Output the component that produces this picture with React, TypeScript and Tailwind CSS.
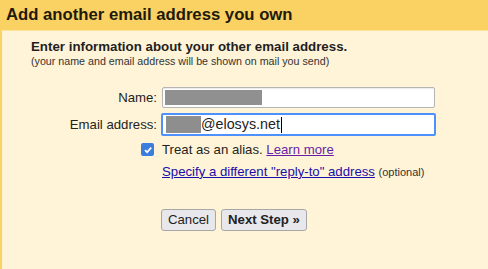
import React from "react";

const App: React.FC = () => {
  return (
    <div className="w-[488px] h-[269px] overflow-hidden bg-[#fff4d8] font-['Liberation_Sans',Arial,sans-serif] text-[#222]">
      <div className="h-[30px] bg-[#fad163] pl-[6px] pt-[5px] text-[16.7px] font-bold leading-[20px] text-[#1f1a0c]">
        Add another email address you own
      </div>
      <div className="h-[239px] border-l-[2px] border-t border-[#fad163] border-t-[#fde49a] pl-[29px] pt-[8px]">
        <div className="text-[13.3px] font-bold leading-[16px] text-[#1f1f1f]">
          Enter information about your other email address.
        </div>
        <div className="text-[10.7px] leading-[13px] text-[#333]">
          (your name and email address will be shown on mail you send)
        </div>

        <div className="mt-[19px] grid grid-cols-[131px_1fr] items-center gap-y-[5px] text-[13.2px]">
          <label className="pr-[5px] text-right text-[#222]">Name:</label>
          <div className="flex h-[21px] w-[273px] items-center rounded-[2px] border border-[#b5b5b5] bg-white px-[2px] shadow-[inset_0_1px_1px_rgba(0,0,0,0.08)]">
            <span className="h-[15px] w-[97px] bg-[#909090]" />
          </div>
          <label className="pr-[5px] text-right text-[#222]">Email address:</label>
          <div className="-ml-[1px] flex h-[23px] w-[275px] items-center rounded-[2px] border-2 border-[#4d90fe] bg-white px-[3px] text-[14.3px]">
            <span className="h-[17px] w-[35px] bg-[#8e8e8e]" />
            <span className="text-[#222]">@elosys.net</span>
            <span className="ml-px h-[16px] w-px bg-black" />
          </div>
        </div>

        <div className="ml-[110px] mt-[4px] flex items-center gap-[8px] text-[13.2px]">
          <span className="flex h-[13px] w-[13px] items-center justify-center rounded-[2px] bg-[#3b7ddd]">
            <svg width="10" height="10" viewBox="0 0 10 10">
              <path d="M2 5.2 L4.1 7.2 L8.2 2.6" fill="none" stroke="white" strokeWidth="1.7" />
            </svg>
          </span>
          <span>
            Treat as an alias.{" "}
            <a href="#" className="text-[#681da8] underline">Learn more</a>
          </span>
        </div>
        <div className="ml-[131px] mt-[2px] text-[13.2px]">
          <a href="#" className="text-[#1a0dab] underline">
            Specify a different "reply-to" address
          </a>{" "}
          <span className="text-[11px] text-[#333]">(optional)</span>
        </div>

        <div className="ml-[130px] mt-[27px] flex gap-[5px]">
          <button className="h-[22px] rounded-[3px] border border-[#a7a7a7] bg-[#e8e8ec] px-[6px] text-[13.2px] text-[#222]">
            Cancel
          </button>
          <button className="h-[22px] rounded-[3px] border border-[#a7a7a7] bg-[#e8e8ec] px-[6px] text-[13.2px] font-bold text-[#222]">
            Next Step »
          </button>
        </div>
      </div>
    </div>
  );
};

export default App;
